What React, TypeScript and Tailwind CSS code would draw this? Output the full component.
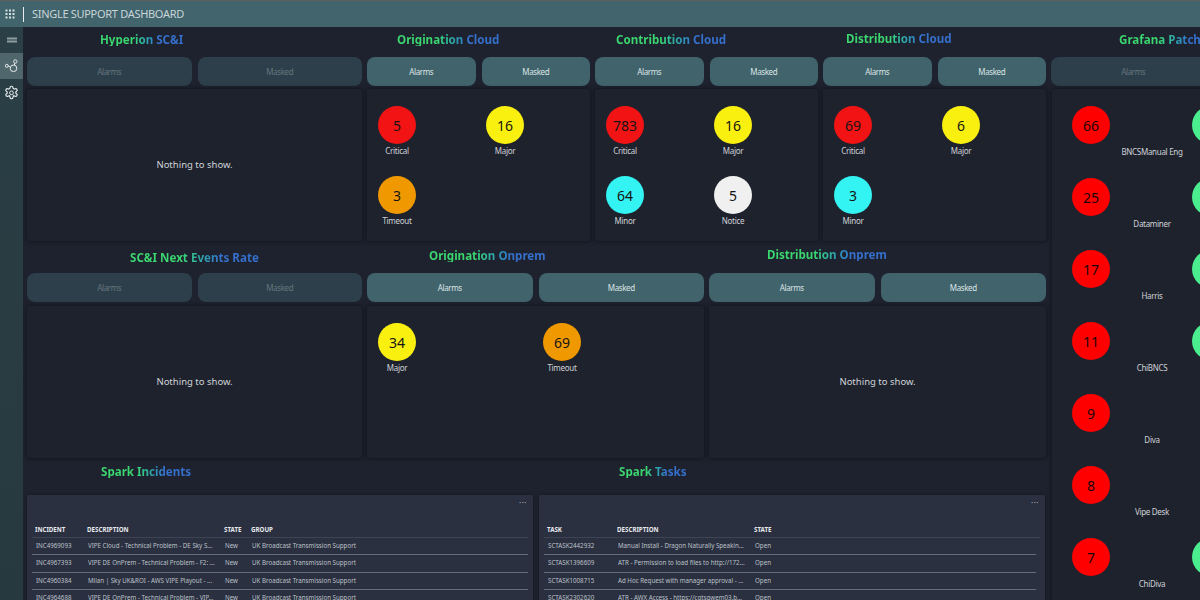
import React from "react";

const font = { fontFamily: '"Noto Sans", "Open Sans", sans-serif' };

function Title({ text, cls }: { text: string; cls: string }) {
  return (
    <div className={`flex shrink-0 items-start ${cls}`}>
      <span className="block bg-gradient-to-r from-[#3bd870] from-40% to-[#3570cc] to-70% bg-clip-text text-[11.6px] font-bold leading-[13px] text-transparent">
        {text}
      </span>
    </div>
  );
}

function Buttons({ dim }: { dim?: boolean }) {
  const c = dim
    ? "bg-[#2d3f4a] text-[#66757e]"
    : "bg-[#41636c] text-[#dbe3e5]";
  return (
    <div className="flex h-[29px] shrink-0 gap-[6px]">
      <div className={`flex flex-1 items-center justify-center rounded-[8px] text-[8px] tracking-[-0.4px] ${c}`}>Alarms</div>
      <div className={`flex flex-1 items-center justify-center rounded-[8px] text-[8px] tracking-[-0.4px] ${c}`}>Masked</div>
    </div>
  );
}

function Panel({ children, cls }: { children?: React.ReactNode; cls: string }) {
  return (
    <div className={`shrink-0 rounded-[3px] bg-[#1e222d] shadow-[0_0_4px_#0e1016] ${cls}`}>{children}</div>
  );
}

function Empty() {
  return (
    <div className="flex h-full items-center justify-center text-[9.5px] text-[#d0d3d8]">
      Nothing to show.
    </div>
  );
}

function Stat({ n, label, color }: { n: string; label: string; color: string }) {
  return (
    <div className="ml-[8px] flex h-[70px] w-[38px] flex-col items-center">
      <div className={`flex h-[38px] w-[38px] shrink-0 items-center justify-center rounded-full text-[14px] text-[#141414] ${color}`}>
        {n}
      </div>
      <div className="mt-px whitespace-nowrap text-[8px] leading-[12px] tracking-[-0.3px] text-[#cfd2d8]">{label}</div>
    </div>
  );
}

function Stats({ children }: { children: React.ReactNode }) {
  return <div className="grid grid-cols-2 pl-[3px] pr-[4px] pt-[17px]">{children}</div>;
}

const RED = "bg-[#f21414]";
const YEL = "bg-[#f9f010]";
const ORG = "bg-[#f09800]";
const CYA = "bg-[#33f3f3]";
const WHT = "bg-[#f0f0f0]";

function Section({
  width, title, titleCls, dim, children, panelCls,
}: {
  width: string; title: string; titleCls: string; dim?: boolean; children?: React.ReactNode; panelCls: string;
}) {
  return (
    <div className={`flex shrink-0 flex-col ${width}`}>
      <Title text={title} cls={titleCls} />
      <Buttons dim={dim} />
      <Panel cls={panelCls}>{children}</Panel>
    </div>
  );
}

function GrafanaRow({ n, label, green }: { n: string; label: string; green?: boolean }) {
  return (
    <div className="grid h-[72px] grid-cols-[120px_120px]">
      <div className="pl-[20px]">
        <div className="flex h-[38px] w-[38px] items-center justify-center rounded-full bg-[#ff0000] text-[14px] text-[#1a0505]">
          {n}
        </div>
        <div className="ml-[20px] mt-[2px] w-[120px] whitespace-nowrap text-center text-[8px] leading-[12px] tracking-[-0.3px] text-[#cfd2d8]">
          {label}
        </div>
      </div>
      <div className="pl-[20px]">
        {green && <div className="h-[38px] w-[38px] rounded-full bg-[#4aee8e]" />}
      </div>
    </div>
  );
}

function DataTable({
  cols, head, rows, last,
}: {
  cols: string; head: string[]; rows: string[][]; last?: boolean;
}) {
  return (
    <div className="flex-1 rounded-[1px] bg-[#2a3040] px-[5px] shadow-[0_0_3px_#12151c]">
      <div className="flex h-[17px] items-start justify-end pr-[1px] pt-[1px] text-[8px] leading-[14px] tracking-[0.5px] text-[#aeb3bd]">
        ···
      </div>
      <div className={`grid h-[25.5px] items-end border-b border-[#3d4453] pb-[2px] pl-[3px] text-[6.2px] font-bold leading-[10px] text-[#e8eaee] ${cols}`}>
        {head.map((h) => <div key={h}>{h}</div>)}
      </div>
      {rows.map((r) => (
        <div
          key={r[0]}
          className={`grid h-[17.5px] items-center border-b border-[#666c79] pl-[4px] text-[6.2px] leading-[10px] text-[#bdc1c9] ${last ? "mr-[4px]" : ""} ${cols}`}
        >
          {r.map((c, i) => <div key={i} className="whitespace-nowrap">{c}</div>)}
        </div>
      ))}
    </div>
  );
}

export default function App() {
  return (
    <div style={font} className="flex h-[600px] w-[1200px] flex-col overflow-hidden bg-[#1e222e]">
      <header className="flex h-[27px] shrink-0 items-center border-t border-[#5a5f60] bg-[#42646d] pl-[5px]">
        <svg width="10" height="10" viewBox="0 0 10 10" fill="#d5dfe2">
          {[0.5, 4, 7.5].flatMap((y) =>
            [0.5, 4, 7.5].map((x) => <rect key={`${x}-${y}`} x={x} y={y} width="2" height="2" />)
          )}
        </svg>
        <div className="ml-[8px] h-[15px] w-px bg-[#e8eef0]" />
        <div className="ml-[8px] text-[11px] tracking-[-0.3px] text-[#c9d4d7]">SINGLE SUPPORT DASHBOARD</div>
      </header>
      <div className="flex min-h-0 flex-1">
        <aside className="flex w-[23px] shrink-0 flex-col bg-gradient-to-b from-[#2a3f46] to-[#26393e]">
          <div className="flex h-[26px] items-center justify-center">
            <svg width="10" height="6" viewBox="0 0 10 6" fill="#8d9ca1">
              <rect y="0.5" width="10" height="2" />
              <rect y="3.5" width="10" height="2" />
            </svg>
          </div>
          <div className="flex h-[26px] items-center justify-center bg-[#4f666c]">
            <svg width="14" height="14" viewBox="0 0 14 14" fill="none" stroke="#e4eaec" strokeWidth="1">
              <circle cx="1.800" cy="6.800" r="1.500" />
              <circle cx="10.300" cy="2.500" r="1.700" />
              <circle cx="8.500" cy="9.300" r="3.300" />
              <path d="M3.300 7 5.200 8M9.800 4.200 9.300 6" />
            </svg>
          </div>
          <div className="flex h-[26px] items-center justify-center">
            <svg width="15" height="15" viewBox="0 0 24 24" fill="none" stroke="#e4eaec" strokeWidth="1.900">
              <path d="M12.220 2h-.44a2 2 0 0 0-2 2v.18a2 2 0 0 1-1 1.730l-.43.25a2 2 0 0 1-2 0l-.15-.08a2 2 0 0 0-2.730.73l-.22.38a2 2 0 0 0 .73 2.730l.15.1a2 2 0 0 1 1 1.720v.51a2 2 0 0 1-1 1.740l-.15.09a2 2 0 0 0-.73 2.730l.22.38a2 2 0 0 0 2.730.73l.15-.08a2 2 0 0 1 2 0l.43.25a2 2 0 0 1 1 1.730V20a2 2 0 0 0 2 2h.44a2 2 0 0 0 2-2v-.18a2 2 0 0 1 1-1.730l.43-.25a2 2 0 0 1 2 0l.15.08a2 2 0 0 0 2.730-.73l.22-.39a2 2 0 0 0-.73-2.730l-.15-.08a2 2 0 0 1-1-1.740v-.5a2 2 0 0 1 1-1.740l.15-.09a2 2 0 0 0 .73-2.730l-.22-.38a2 2 0 0 0-2.730-.73l-.15.08a2 2 0 0 1-2 0l-.43-.25a2 2 0 0 1-1-1.730V4a2 2 0 0 0-2-2z" />
              <path d="M12 9.500a3 3 0 1 0 0 6 3 3 0 0 0 0-6zM10 15.500l-1.500 2M14 15.500l1.500 2" strokeWidth="1.600" />
            </svg>
          </div>
        </aside>
        <main className="flex min-w-0 flex-1 flex-col pl-[4px]">
          <div className="flex h-[217px] shrink-0 gap-[5px]">
            <Section width="w-[335px]" title="Hyperion SC&I" titleCls="h-[30px] pl-[73px] pt-[6px]" dim panelCls="mt-[3px] h-[152px]">
              <Empty />
            </Section>
            <Section width="w-[223px]" title="Origination Cloud" titleCls="h-[30px] pl-[30px] pt-[6px]" panelCls="mt-[3px] h-[152px]">
              <Stats>
                <Stat n="5" label="Critical" color={RED} />
                <Stat n="16" label="Major" color={YEL} />
                <Stat n="3" label="Timeout" color={ORG} />
              </Stats>
            </Section>
            <Section width="w-[223px]" title="Contribution Cloud" titleCls="h-[30px] pl-[21px] pt-[6px]" panelCls="mt-[3px] h-[152px]">
              <Stats>
                <Stat n="783" label="Critical" color={RED} />
                <Stat n="16" label="Major" color={YEL} />
                <Stat n="64" label="Minor" color={CYA} />
                <Stat n="5" label="Notice" color={WHT} />
              </Stats>
            </Section>
            <Section width="w-[223px]" title="Distribution Cloud" titleCls="h-[30px] pl-[23px] pt-[5px]" panelCls="mt-[3px] h-[152px]">
              <Stats>
                <Stat n="69" label="Critical" color={RED} />
                <Stat n="6" label="Major" color={YEL} />
                <Stat n="3" label="Minor" color={CYA} />
              </Stats>
            </Section>
            <Section width="w-[335px]" title="Grafana Patching" titleCls="h-[30px] pl-[68px] pt-[6px]" dim panelCls="ml-px mt-[3px] h-[520px] pt-[17px]">
              <GrafanaRow n="66" label="BNCSManual Eng" green />
              <GrafanaRow n="25" label="Dataminer" green />
              <GrafanaRow n="17" label="Harris" green />
              <GrafanaRow n="11" label="ChiBNCS" green />
              <GrafanaRow n="9" label="Diva" />
              <GrafanaRow n="8" label="Vipe Desk" />
              <GrafanaRow n="7" label="ChiDiva" green />
            </Section>
          </div>
          <div className="flex h-[217px] shrink-0 gap-[5px] pr-[156px]">
            <Section width="w-[335px]" title="SC&I Next Events Rate" titleCls="h-[29px] pl-[103px] pt-[7px]" dim panelCls="mt-[4px] h-[152px]">
              <Empty />
            </Section>
            <Section width="w-[337px]" title="Origination Onprem" titleCls="h-[29px] pl-[62px] pt-[5px]" panelCls="mt-[4px] h-[152px]">
              <Stats>
                <Stat n="34" label="Major" color={YEL} />
                <Stat n="69" label="Timeout" color={ORG} />
              </Stats>
            </Section>
            <Section width="w-[337px]" title="Distribution Onprem" titleCls="h-[29px] pl-[58px] pt-[4px]" panelCls="mt-[4px] h-[152px]">
              <Empty />
            </Section>
          </div>
          <div className="flex w-[1018px] shrink-0 gap-[6px]">
            <div className="w-[506px] shrink-0">
              <Title text="Spark Incidents" cls="h-[34px] pl-[74px] pt-[4px]" />
            </div>
            <div className="flex-1">
              <Title text="Spark Tasks" cls="h-[34px] pl-[80px] pt-[4px]" />
            </div>
          </div>
          <div className="flex w-[1018px] flex-1 gap-[6px]">
            <DataTable
              cols="grid-cols-[52px_137px_27px_1fr]"
              head={["INCIDENT", "DESCRIPTION", "STATE", "GROUP"]}
              rows={[
                ["INC4969093", "VIPE Cloud - Technical Problem - DE Sky S...", "New", "UK Broadcast Transmission Support"],
                ["INC4967393", "VIPE DE OnPrem - Technical Problem - F2: ...", "New", "UK Broadcast Transmission Support"],
                ["INC4960384", "Milan | Sky UK&ROI - AWS VIPE Playout - ...", "New", "UK Broadcast Transmission Support"],
                ["INC4964688", "VIPE DE OnPrem - Technical Problem - VIP...", "New", "UK Broadcast Transmission Support"],
              ]}
            />
            <DataTable
              last
              cols="grid-cols-[70px_137px_1fr]"
              head={["TASK", "DESCRIPTION", "STATE"]}
              rows={[
                ["SCTASK2442932", "Manual Install - Dragon Naturally Speakin...", "Open"],
                ["SCTASK1396609", "ATR - Permission to load files to http://172...", "Open"],
                ["SCTASK1008715", "Ad Hoc Request with manager approval - ...", "Open"],
                ["SCTASK2302620", "ATR - AWX Access - https://cgtsqwem03.b...", "Open"],
              ]}
            />
          </div>
        </main>
      </div>
    </div>
  );
}
